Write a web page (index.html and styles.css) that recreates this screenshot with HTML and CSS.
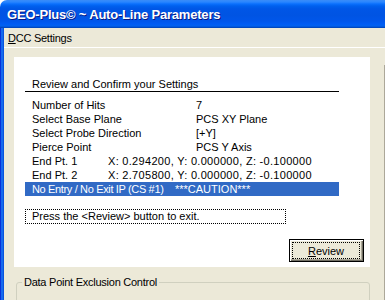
FILE: index.html
```html
<!DOCTYPE html>
<html lang="en">
<head>
    <meta charset="UTF-8">
    <title>GEO-Plus - Auto-Line Parameters</title>
    <link rel="stylesheet" href="styles.css">
</head>
<body>

    <!-- Title bar -->
    <div class="titlebar">
        <span class="title">GEO-Plus© ~ Auto-Line Parameters</span>
    </div>

    <div class="frame">
        <div class="edge"></div>

        <div class="client">
            <div class="menubar">
                <span class="menu-item"><u>D</u>CC Settings</span>
            </div>

            <div class="content">
                <div class="main">

                    <!-- Review panel -->
                    <div class="panel">
                        <div class="summary">
                            <div class="summary-title">Review and Confirm your Settings</div>

                            <div class="rows">
                                <div class="row"><span class="label">Number of Hits</span><span>7</span></div>
                                <div class="row"><span class="label">Select Base Plane</span><span>PCS XY Plane</span></div>
                                <div class="row"><span class="label">Select Probe Direction</span><span>[+Y]</span></div>
                                <div class="row"><span class="label">Pierce Point</span><span>PCS Y Axis</span></div>
                                <div class="row"><span class="label short">End Pt. 1</span><span class="coords">X: 0.294200, Y: 0.000000, Z: -0.100000</span></div>
                                <div class="row"><span class="label short">End Pt. 2</span><span class="coords">X: 2.705800, Y: 0.000000, Z: -0.100000</span></div>
                                <div class="row selected"><span class="label warn">No Entry / No Exit IP (CS #1)</span><span>***CAUTION***</span></div>
                            </div>
                        </div>

                        <div class="hint">Press the &lt;Review&gt; button to exit.</div>

                        <div class="actions">
                            <button class="btn"><span class="focus"><u>R</u>eview</span></button>
                        </div>
                    </div>

                    <!-- Group box, cut off by the window bottom -->
                    <div class="group">
                        <div class="group-title">Data Point Exclusion Control</div>
                        <div class="ticks">
                            <span class="tick"></span>
                            <span class="tick"></span>
                            <span class="tick"></span>
                            <span class="tick"></span>
                            <span class="tick last"></span>
                        </div>
                    </div>
                </div>

                <div class="side"></div>
            </div>
        </div>
    </div>

</body>
</html>
```

FILE: styles.css
```css
html, body {
    margin: 0;
    padding: 0;
    background-color: #fff;
}

body {
    width: 385px;
    height: 300px;
    overflow: hidden;
    font-family: 'Liberation Sans', Arial, sans-serif;
    font-size: 11px;
    color: #000;
}

/* Title bar */
.titlebar {
    height: 28px;
    border-top-left-radius: 7px;
    background: linear-gradient(#3a8cf8 0, #2a86ff 2px, #0a6ffc 4px, #0060ee 6px,
                                #0056e6 9px, #0054e3 15px, #0056ea 21px, #005cf4 24px,
                                #0262ee 26px, #0050d4 27px, #0040ab 28px);
    display: flex;
    align-items: center;
    padding-left: 7px;
}

.title {
    color: #fff;
    font-weight: bold;
    font-size: 13px;
    letter-spacing: -0.2px;
    text-shadow: 1px 1px #0a1883;
    margin-top: 1px;
}

/* Window frame */
.frame {
    display: flex;
    height: 272px;
    overflow: hidden;
}

.edge {
    width: 4px;
    flex: none;
    background: linear-gradient(90deg, #0831d9 0 1px, #166aee 1px 3px, #0855dd 3px);
}

.client {
    flex: 1;
    background-color: #ece9d8;
    display: flex;
    flex-direction: column;
}

.menubar {
    height: 19px;
    flex: none;
    border-bottom: 1px solid #fff;
    display: flex;
    align-items: center;
    padding-left: 3px;
}

.menu-item {
    letter-spacing: -0.25px;
    padding-left: 1px;
}

.content {
    flex: none;
    display: flex;
}

.main {
    width: 366px;
    padding: 9px 0 0 10px;
    flex: none;
}

/* White review panel */
.panel {
    background-color: #fff;
    width: 356px;
    height: 190px;
    padding-top: 20px;
    display: flex;
    flex-direction: column;
}

.summary {
    width: 314px;
    margin-left: 11px;
}

.summary-title {
    line-height: 14px;
    padding-left: 7px;
    border-bottom: 1px solid #000;
}

.rows {
    margin-top: 6px;
}

.row {
    display: flex;
    line-height: 14px;
    height: 14px;
    padding-left: 7px;
    white-space: nowrap;
}

.label {
    width: 164px;
    flex: none;
}

.label.short {
    width: 76px;
}

.label.warn {
    width: 143px;
    letter-spacing: -0.35px;
}

.coords {
    letter-spacing: 0.3px;
}

.row.selected {
    background-color: #316ac5;
    color: #fff;
}

.hint {
    width: 253px;
    margin: 13px 0 0 11px;
    border: 1px dotted #000;
    line-height: 13px;
    padding-left: 6px;
}

.actions {
    display: flex;
    justify-content: flex-end;
    padding-right: 6px;
    margin-top: 15px;
}

.btn {
    width: 75px;
    height: 23px;
    padding: 0;
    border: 1px solid #000;
    background-color: #ece9d8;
    box-shadow: inset 1px 1px #fff, inset -1px -1px #716f64, inset -2px -2px #aca899;
    font-family: 'Liberation Sans', Arial, sans-serif;
    font-size: 11px;
    color: #000;
    display: flex;
    align-items: stretch;
}

.focus {
    flex: 1;
    margin: 2px 3px 2px 2px;
    border: 1px dotted #000;
    display: flex;
    align-items: center;
    justify-content: center;
}

/* Group box */
.group {
    width: 352px;
    height: 40px;
    margin: 15px 0 0 2px;
    border: 1px solid #d0d0bf;
    border-radius: 3px;
}

.group-title {
    width: max-content;
    line-height: 14px;
    margin: -8px 0 0 5px;
    padding: 0 2px;
    background-color: #ece9d8;
    letter-spacing: -0.25px;
}

.ticks {
    display: flex;
    height: 6px;
    margin-top: 6px;
    padding-left: 44px;
}

.tick {
    width: 1px;
    height: 6px;
    background-color: #000;
    margin-right: 60px;
}

.tick.last {
    margin-left: 17px;
}

/* Right hand panel, mostly cut off */
.side {
    flex: 1;
    margin: 17px 0 0 4px;
    border-top: 1px solid #aca899;
    border-left: 1px solid #aca899;
    box-shadow: inset 1px 1px #fff;
}
```
